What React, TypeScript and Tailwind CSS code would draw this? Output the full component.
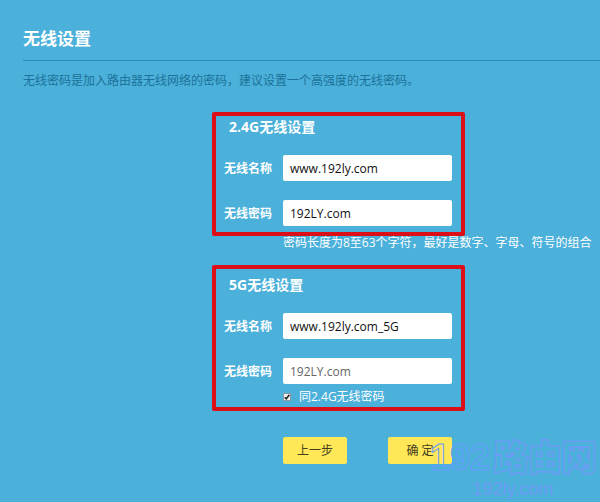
import React, { useState } from "react";

type FieldProps = {
  id: string;
  label: string;
  value: string;
  onChange: (value: string) => void;
  disabled?: boolean;
};

function Field({ id, label, value, onChange, disabled }: FieldProps) {
  return (
    <div className="flex items-center">
      <label htmlFor={id} className="w-[59px] shrink-0 pt-[2px] text-xs font-bold">
        {label}
      </label>
      <input
        id={id}
        type="text"
        value={value}
        disabled={disabled}
        onChange={(e) => onChange(e.target.value)}
        className="h-[26px] min-w-0 flex-1 rounded-xs bg-white px-[7px] text-xs text-[#111] outline-none disabled:text-[#666]"
      />
    </div>
  );
}

function StepButton({ children }: { children: React.ReactNode }) {
  return (
    <button
      type="button"
      className="h-[27px] w-16 rounded-xs bg-[#ffe757] text-xs whitespace-pre text-[#443f20] hover:bg-[#ffee80]"
    >
      {children}
    </button>
  );
}

export default function App() {
  const [name24, setName24] = useState("www.192ly.com");
  const [password24, setPassword24] = useState("192LY.com");
  const [name5, setName5] = useState("www.192ly.com_5G");
  const [password5, setPassword5] = useState("192LY.com");
  const [same, setSame] = useState(true);

  return (
    <main className="relative min-h-screen overflow-hidden bg-[#4bb0da] font-['Open_Sans','Noto_Sans_CJK_SC',sans-serif] text-white">
      <header className="pt-[26px] pl-[23px]">
        <h1 className="text-[17px] leading-[26px] font-bold">无线设置</h1>
        <hr className="mt-2 border-t border-[#268cb8]" />
        <p className="mt-[11px] text-xs leading-[18px] text-[#1c7299]">
          无线密码是加入路由器无线网络的密码，建议设置一个高强度的无线密码。
        </p>
      </header>

      <form className="mt-[22px] pl-[212px]">
        <section className="w-[253px] rounded-xs border-4 border-[#dc0f18] pr-[9px] pb-[6px] pl-2">
          <h2 className="pl-[5px] text-sm leading-[22px] font-bold">2.4G无线设置</h2>
          <div className="mt-[17px] flex flex-col gap-[19px]">
            <Field id="name-24" label="无线名称" value={name24} onChange={setName24} />
            <Field id="password-24" label="无线密码" value={password24} onChange={setPassword24} />
          </div>
        </section>
        <p className="pl-[71px] text-xs leading-[14px] whitespace-nowrap">
          密码长度为8至63个字符，最好是数字、字母、符号的组合
        </p>

        <section className="mt-[15px] w-[253px] rounded-xs border-4 border-[#dc0f18] pt-[5px] pr-[9px] pl-2">
          <h2 className="pl-[5px] text-sm leading-[22px] font-bold">5G无线设置</h2>
          <div className="mt-[17px] flex flex-col gap-[19px]">
            <Field id="name-5" label="无线名称" value={name5} onChange={setName5} />
            <Field
              id="password-5"
              label="无线密码"
              value={same ? password24 : password5}
              onChange={setPassword5}
              disabled={same}
            />
          </div>
          <label className="mt-[3px] flex h-5 items-center gap-2 pl-[59px] text-xs">
            <span className="grid">
              <input
                type="checkbox"
                checked={same}
                onChange={(e) => setSame(e.target.checked)}
                className="peer col-start-1 row-start-1 size-2 appearance-none border border-[#8b9aa0] bg-[#eeeeee]"
              />
              <svg
                viewBox="0 0 8 8"
                className="pointer-events-none invisible col-start-1 row-start-1 size-2 peer-checked:visible"
              >
                <path d="M1.8 4.2 3.3 5.8 6.4 1.8" fill="none" stroke="#222" strokeWidth="1.5" />
              </svg>
            </span>
            同2.4G无线密码
          </label>
        </section>

        <div className="mt-[26px] flex gap-[41px] pl-[71px]">
          <StepButton>上一步</StepButton>
          <StepButton>确 定</StepButton>
        </div>
      </form>

      {/* site watermark */}
      <div className="pointer-events-none absolute right-1 bottom-1 text-center font-['Liberation_Sans','Noto_Sans_CJK_SC',sans-serif]">
        <p className="mb-1 flex items-center justify-end gap-1 text-[34px] leading-9 font-bold">
          <span className="text-4xl leading-9 text-transparent [-webkit-text-stroke:1px_#6699ff]">192</span>
          <span className="text-[#4bb0da] [-webkit-text-stroke:3px_#6c9cf5] [paint-order:stroke]">路由网</span>
        </p>
        <p className="text-lg leading-[18px] text-[#6c9cf5]">192ly.com</p>
      </div>
    </main>
  );
}
